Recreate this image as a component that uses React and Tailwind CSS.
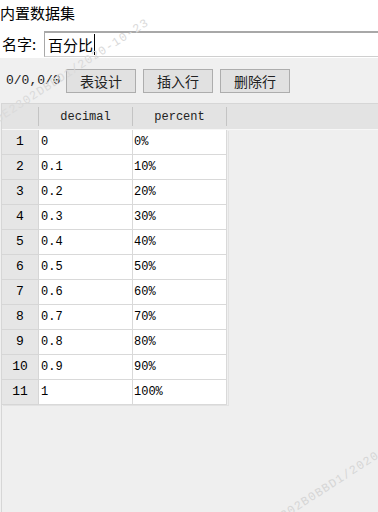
import React from "react";

const rows = [
  ["0", "0%"],
  ["0.1", "10%"],
  ["0.2", "20%"],
  ["0.3", "30%"],
  ["0.4", "40%"],
  ["0.5", "50%"],
  ["0.6", "60%"],
  ["0.7", "70%"],
  ["0.8", "80%"],
  ["0.9", "90%"],
  ["1", "100%"],
];

const cjk = "font-['Microsoft_YaHei','Noto_Sans_CJK_SC',sans-serif]";
const mono = "font-['Liberation_Mono','Noto_Sans_CJK_SC',monospace]";

function ToolButton({ children }) {
  return (
    <button
      type="button"
      className={`h-[24px] w-[70px] border border-[#adadad] bg-[#e1e1e1] text-[14px] leading-none text-[#222] ${cjk}`}
    >
      {children}
    </button>
  );
}

export default function App() {
  return (
    <div className="relative h-[512px] w-[378px] overflow-hidden bg-[#f0f0f0] text-black">
      {/* name area */}
      <div className="h-[58px] bg-white">
        <div className={`h-[31px] pt-[3px] text-[15px] leading-[20px] ${cjk}`}>内置数据集</div>
        <div className="flex h-[26px] items-center">
          <div className={`w-[44px] pl-[2px] text-[15px] ${cjk}`}>名字:</div>
          <div className="-mr-[4px] flex h-[26px] flex-1 items-center border border-t-2 border-[#a8a8a8] border-b-[#cfcfcf] bg-white pl-[3px]">
            <span className={`text-[15px] leading-none ${cjk}`}>百分比</span>
            <span className="ml-px h-[21px] w-px bg-black" />
          </div>
        </div>
      </div>

      {/* toolbar */}
      <div className="flex h-[45px] items-center">
        <div className={`w-[66px] pl-[6px] text-[13px] text-[#222] ${mono}`}>0/0,0/0</div>
        <div className="flex gap-[7px]">
          <ToolButton>表设计</ToolButton>
          <ToolButton>插入行</ToolButton>
          <ToolButton>删除行</ToolButton>
        </div>
      </div>

      {/* table */}
      <div className="ml-px h-[409px] border-l border-t border-[#d6d6d6] bg-[#efefef]">
        <div className="flex h-[26px] items-center border-b border-[#f7f7f7] bg-[#e3e3e3]">
          <div className="h-[19px] w-[37px] border-r border-[#c4c4c4]" />
          <div className={`flex h-[19px] w-[94px] items-center justify-center border-r border-[#c4c4c4] text-[12px] text-[#222] ${mono}`}>
            decimal
          </div>
          <div className={`flex h-[19px] w-[94px] items-center justify-center border-r border-[#c4c4c4] text-[12px] text-[#222] ${mono}`}>
            percent
          </div>
        </div>
        <div className="w-[226px] shadow-[1px_1px_0_#e2e2e2]">
          {rows.map(([d, p], i) => (
            <div key={i} className="flex h-[25px]">
              <div className={`flex w-[37px] items-center justify-center border-b border-r border-[#d6d6d6] bg-[#e6e6e6] text-[13px] text-black ${mono}`}>
                {i + 1}
              </div>
              <div className={`flex w-[94px] items-center border-b border-r border-[#d9d9d9] bg-white pl-[2px] text-[12px] ${mono}`}>
                {d}
              </div>
              <div className={`flex w-[94px] items-center border-b border-r border-[#d9d9d9] bg-white pl-[1px] text-[12px] ${mono}`}>
                {p}
              </div>
            </div>
          ))}
        </div>
      </div>

      {/* watermarks */}
      <div
        className={`pointer-events-none absolute left-[-18px] top-[62px] origin-center -rotate-[33deg] whitespace-nowrap text-[12px] tracking-[1px] text-[#dadada] ${mono}`}
      >
        0E2302DBBD1/2020-10-23
      </div>
      <div
        className={`pointer-events-none absolute left-[246px] top-[470px] origin-center -rotate-[33deg] whitespace-nowrap text-[12px] tracking-[1px] text-[#d6d6d6] ${mono}`}
      >
        0E2302B0BBD1/2020-10-23
      </div>
    </div>
  );
}
